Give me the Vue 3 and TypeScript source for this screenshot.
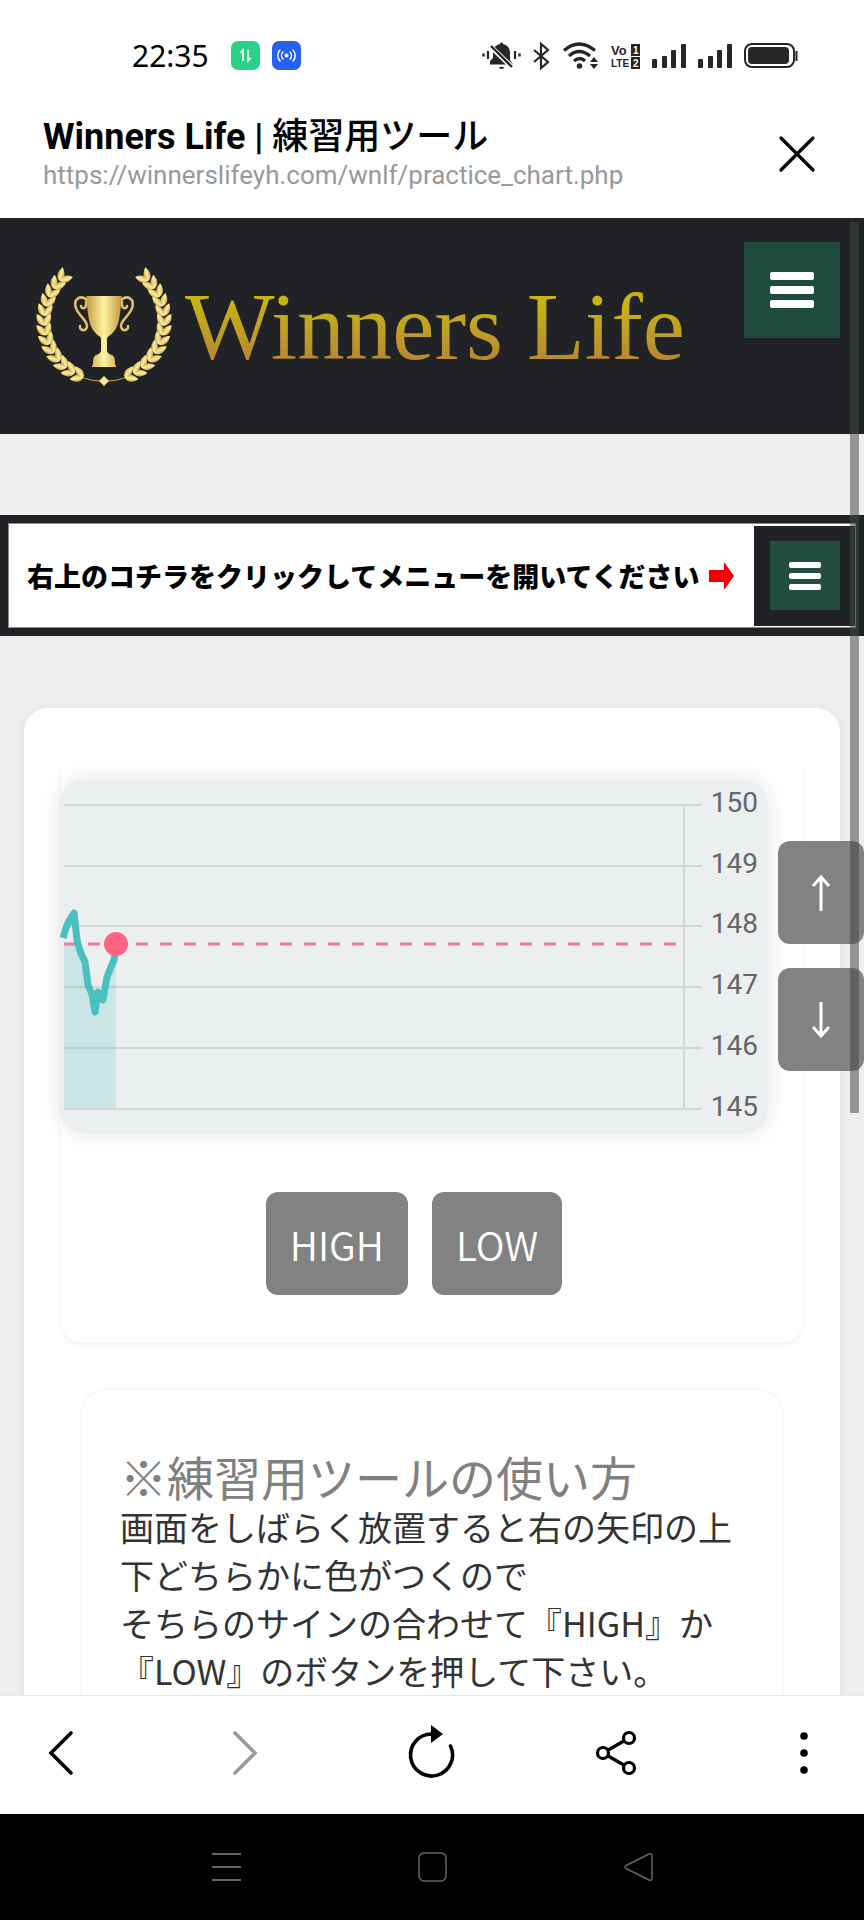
<script setup lang="ts">
interface Leaf { x: number; y: number; angle: number }
interface Tick { label: number; y: number }

// Pairs of leaves along the left half of an ellipse, from its foot to its tip.
const PAIRS = 13
const RX = 60
const RY = 60
const leaves: Leaf[] = []
for (let i = 0; i < PAIRS; i++) {
  const t = ((110 + (i * 112) / (PAIRS - 1)) * Math.PI) / 180
  const x = 69 + RX * Math.cos(t)
  const y = 56 + RY * Math.sin(t)
  const up = (Math.atan2(-RX * Math.sin(t), -RY * Math.cos(t)) * 180) / Math.PI
  leaves.push({ x, y, angle: up - 28 }, { x, y, angle: up + 32 })
}

const ticks: Tick[] = [150, 149, 148, 147, 146, 145].map((label, i) => ({ label, y: 25 + Math.round(i * 60.7) }))

const series: [number, number][] = [
  [3, 158], [6, 148], [9, 141], [14, 133], [17, 160], [20, 171], [25, 182], [28, 205],
  [32, 214], [35, 232], [38, 212], [43, 220], [47, 197], [51, 187], [54, 180], [56, 165],
]
const linePoints: string = series.map((p) => p.join(',')).join(' ')
const areaPoints: string = `4,158 ${linePoints} 56,328 4,328`
</script>

<template>
  <div class="phone">
    <div class="status">
      <time class="clock">22:35</time>
      <svg class="app-dot first" width="29" height="29" viewBox="0 0 29 29" aria-hidden="true">
        <rect width="29" height="29" rx="7" fill="#2bd185" />
        <path d="M9 12l3-3v11M17 9v11l3-3" fill="none" stroke="#fff" stroke-width="1.7" />
      </svg>
      <svg class="app-dot" width="29" height="29" viewBox="0 0 29 29" aria-hidden="true">
        <rect width="29" height="29" rx="7" fill="#2560f0" />
        <circle cx="14.500" cy="14.500" r="2" fill="#fff" />
        <path d="M11 11a5 5 0 0 0 0 7M18 11a5 5 0 0 1 0 7M8 9a8 8 0 0 0 0 11M21 9a8 8 0 0 1 0 11" fill="none" stroke="#fff" stroke-width="1.5" stroke-linecap="round" />
      </svg>
      <div class="status-right">
        <svg width="39" height="28" viewBox="0 0 39 28" fill="#262626" aria-hidden="true">
          <path d="M18 2q0-1.500 1.500-1.500T21 2q6 1 7 8v8l3 4.500H8V19l3-3v-6q1-7 7-8zM17 25h5q0 2-2.500 2T17 25z" />
          <path d="M7 3l24 23" stroke="#fff" stroke-width="5" />
          <path d="M9 4l21 21" stroke="#262626" stroke-width="2.400" />
          <path d="M6 9v8M33 9v8" stroke="#262626" stroke-width="2.200" />
          <path d="M1.500 11.500v3M37.500 11.500v3" stroke="#262626" stroke-width="2.400" />
        </svg>
        <svg width="18" height="28" viewBox="0 0 18 28" aria-hidden="true">
          <path d="M1 8l14 12-7 6V2l7 6L1 20" fill="none" stroke="#262626" stroke-width="2.200" />
        </svg>
        <svg width="36" height="28" viewBox="0 0 36 28" aria-hidden="true">
          <path d="M1 8.500q15-13 31 0M6 14q10-9 21 0M11 19q6-5 11 0" fill="none" stroke="#262626" stroke-width="3.200" />
          <circle cx="16.500" cy="24" r="2.800" fill="#262626" />
          <path d="M27 20l4-5 4 5zM27 22l4 5 4-5z" fill="#262626" />
        </svg>
        <svg width="29" height="28" viewBox="0 0 29 28" aria-hidden="true">
          <rect x="20" y="2" width="9" height="12" fill="#262626" />
          <rect x="20" y="15" width="9" height="12" fill="#262626" />
          <g class="volte" fill="#262626">
            <text class="vo" x="0" y="13">Vo</text>
            <text x="0" y="25">LTE</text>
          </g>
          <g class="volte" fill="#fff">
            <text x="22" y="12">1</text>
            <text x="22" y="25">2</text>
          </g>
        </svg>
        <svg v-for="n in 2" :key="n" width="34" height="28" viewBox="0 0 34 28" fill="#262626" aria-hidden="true">
          <rect y="17" width="5" height="9" rx="1" />
          <rect x="10" y="14" width="5" height="12" rx="1" />
          <rect x="19" y="8" width="5" height="18" rx="1" />
          <rect x="29" y="2" width="5" height="24" rx="1" />
        </svg>
        <svg width="54" height="28" viewBox="0 0 54 28" aria-hidden="true">
          <rect x="1" y="2" width="49" height="23" rx="7" fill="none" stroke="#262626" stroke-width="2" />
          <rect x="4" y="5" width="41" height="17" rx="4" fill="#262626" />
          <path d="M52.500 9v10" stroke="#262626" stroke-width="2" />
        </svg>
      </div>
    </div>

    <header class="app-bar">
      <div class="page-info">
        <h1>Winners Life | <span class="jp">練習用ツール</span></h1>
        <p>https://winnerslifeyh.com/wnlf/practice_chart.php</p>
      </div>
      <button class="icon-btn" type="button" aria-label="閉じる">
        <svg width="40" height="40" viewBox="0 0 40 40"><path d="M4 4l32 32M36 4L4 36" stroke="#000" stroke-width="3.200" stroke-linecap="round" /></svg>
      </button>
    </header>

    <main class="viewport">
      <div class="site-head">
        <a class="logo" href="#top">
          <svg class="crest" width="138" height="124" viewBox="0 0 138 124" aria-hidden="true">
            <defs>
              <linearGradient id="cup" x1="0" x2="1" y1="0" y2="0">
                <stop offset="0" stop-color="#c79a3c" /><stop offset=".5" stop-color="#fdf3a2" /><stop offset="1" stop-color="#c3953a" />
              </linearGradient>
              <linearGradient id="leaf" x1="0" x2="1" y1="0" y2="0">
                <stop offset="0" stop-color="#cda447" /><stop offset=".5" stop-color="#fbefa0" /><stop offset="1" stop-color="#d5ae50" />
              </linearGradient>
              <g id="branch">
                <path
                  v-for="(leaf, i) in leaves" :key="i" fill="url(#leaf)"
                  d="M0 0C-5-4-4-9 0-14C4-9 5-4 0 0Z"
                  :transform="`translate(${leaf.x} ${leaf.y}) rotate(${leaf.angle})`"
                />
                <path d="M49 113q8 3 16 3" fill="none" stroke="#cda447" />
              </g>
            </defs>
            <use href="#branch" />
            <use href="#branch" transform="matrix(-1 0 0 1 138 0)" />
            <path d="M69 111l5 5-5 5-5-5z" fill="#f7e48c" />
            <g fill="none" stroke="#dcc06a" stroke-width="2.600" stroke-linecap="round">
              <path d="M53 36c-8-8-15-1-12 7 2 7 11 12 11 18 0 6-8 5-7 0M51 37c1 8-5 7-5 4" />
              <path d="M85 36c8-8 15-1 12 7-2 7-11 12-11 18 0 6 8 5 7 0M87 37c-1 8 5 7 5 4" />
            </g>
            <path d="M51 31h36l-1 3q0 14-3 25-3 8-9 12-2 1-2 3v12q1 3 5 4 3 1 3 8v2h1v2H57v-2h1v-2q0-7 3-8 4-1 5-4V74q0-2-2-3-6-4-9-12-3-11-3-25z" fill="url(#cup)" />
          </svg>
          <span class="logo-text">Winners Life</span>
        </a>
        <button class="menu" type="button" aria-label="メニュー"><span /><span /><span /></button>
      </div>

      <div class="notice">
        <div class="notice-body">
          <p>右上のコチラをクリックしてメニューを開いてください</p>
          <svg width="25" height="28" viewBox="0 0 25 28" aria-hidden="true"><path d="M0 8h15V0l10 14-10 14v-8H0z" fill="#f00000" /></svg>
          <div class="notice-menu">
            <div class="menu small"><span /><span /><span /></div>
          </div>
        </div>
      </div>

      <section class="card">
        <div class="panel trade">
          <svg class="chart" viewBox="0 0 708 353" role="img" aria-label="練習用チャート">
            <defs><clipPath id="below"><rect y="164" width="708" height="170" /></clipPath></defs>
            <g stroke="#d2d7d8" stroke-width="2">
              <path v-for="t in ticks" :key="t.label" :d="`M4 ${t.y}H642`" />
              <path d="M624 25V328" />
            </g>
            <g class="axis">
              <text v-for="t in ticks" :key="t.label" x="698" :y="t.y + 7">{{ t.label }}</text>
            </g>
            <polygon :points="areaPoints" fill="rgba(75,192,192,.2)" clip-path="url(#below)" />
            <path d="M4 164H616" stroke="#ee7b97" stroke-width="3" stroke-dasharray="12 12" />
            <polyline :points="linePoints" fill="none" stroke="#4bc0c0" stroke-width="7" stroke-linejoin="round" />
            <circle cx="56" cy="164" r="12" fill="#ff6384" />
          </svg>
          <div class="actions">
            <button type="button">HIGH</button>
            <button type="button">LOW</button>
          </div>
        </div>

        <article class="panel guide">
          <h2>※練習用ツールの使い方</h2>
          <p>画面をしばらく放置すると右の矢印の上下どちらかに色がつくので<br>そちらのサインの合わせて『HIGH』か『LOW』のボタンを押して下さい。</p>
        </article>
      </section>

      <div class="signals">
        <button type="button" aria-label="上">
          <svg width="20" height="38" viewBox="0 0 20 38"><path d="M10 37V3M2 12l8-9 8 9" fill="none" stroke="#fff" stroke-width="3" /></svg>
        </button>
        <button type="button" aria-label="下">
          <svg width="20" height="38" viewBox="0 0 20 38"><path d="M10 1v34M2 26l8 9 8-9" fill="none" stroke="#fff" stroke-width="3" /></svg>
        </button>
      </div>
      <div class="thumb" />
    </main>

    <nav class="toolbar">
      <button class="icon-btn" type="button" aria-label="戻る">
        <svg width="48" height="48" viewBox="0 0 48 48"><path d="M34 4L14 24l20 20" fill="none" stroke="#000" stroke-width="3.600" stroke-linecap="round" /></svg>
      </button>
      <button class="icon-btn" type="button" aria-label="進む">
        <svg width="48" height="48" viewBox="0 0 48 48"><path d="M12 4l20 20-20 20" fill="none" stroke="#999" stroke-width="3.600" stroke-linecap="round" /></svg>
      </button>
      <button class="icon-btn" type="button" aria-label="再読み込み">
        <svg width="48" height="48" viewBox="0 0 48 48">
          <path d="M42.500 17A21 21 0 1 1 24 5" fill="none" stroke="#000" stroke-width="3.600" stroke-linecap="round" />
          <path d="M23-4l12 9-12 9z" />
        </svg>
      </button>
      <button class="icon-btn" type="button" aria-label="共有">
        <svg width="48" height="48" viewBox="0 0 48 48">
          <path d="M9 24l26-15M9 24l26 15" stroke="#000" stroke-width="3.200" />
          <g fill="#fff" stroke="#000" stroke-width="3.200"><circle cx="9" cy="24" r="5.500" /><circle cx="35" cy="9" r="5.500" /><circle cx="35" cy="39" r="5.500" /></g>
        </svg>
      </button>
      <button class="icon-btn" type="button" aria-label="その他">
        <svg width="48" height="48" viewBox="0 0 48 48"><circle cx="25" cy="7" r="3.800" /><circle cx="25" cy="24" r="3.800" /><circle cx="25" cy="41" r="3.800" /></svg>
      </button>
    </nav>

    <nav class="system">
      <button class="icon-btn" type="button" aria-label="アプリ一覧">
        <svg width="32" height="32" viewBox="0 0 32 32"><path d="M2 3h29M2 16h29M2 29h29" stroke="#666" stroke-width="2" /></svg>
      </button>
      <button class="icon-btn" type="button" aria-label="ホーム">
        <svg width="32" height="32" viewBox="0 0 32 32"><rect x="3" y="2" width="27" height="28" rx="5" fill="none" stroke="#666" stroke-width="1.500" /></svg>
      </button>
      <button class="icon-btn" type="button" aria-label="戻る">
        <svg width="32" height="32" viewBox="0 0 32 32"><path d="M4 14.500L27 3q3-1 3 2v22q0 3-3 2L4 17.500q-2-1.500 0-3z" fill="none" stroke="#666" stroke-width="1.500" /></svg>
      </button>
    </nav>
  </div>
</template>

<style>
body {
  margin: 0;
}
</style>

<style scoped>
.phone {
  display: flex;
  flex-direction: column;
  height: 100vh;
  overflow: hidden;
  background: #fff;
  font-family: Roboto, "Noto Sans CJK JP", sans-serif;
}
h1, h2, p {
  margin: 0;
  font-weight: 400;
}
svg {
  display: block;
  overflow: visible;
}
button {
  border: 0;
  padding: 0;
  font: inherit;
}
.icon-btn {
  background: none;
}

.status {
  display: flex;
  align-items: center;
  height: 111px;
  padding: 0 66px 0 132px;
}
.clock {
  font: 30px "Noto Sans", sans-serif;
}
.app-dot {
  margin-left: 12px;
}
.app-dot.first {
  margin-left: 22px;
}
.status-right {
  display: flex;
  gap: 12px;
  margin-left: auto;
}
.volte {
  font: bold 10px "Liberation Sans", sans-serif;
}
.volte .vo {
  font-size: 13px;
}

.app-bar {
  display: flex;
  align-items: center;
  justify-content: space-between;
  height: 107px;
  box-sizing: border-box;
  padding: 0 47px 22px 43px;
}
.app-bar h1 {
  font-size: 36px;
  font-weight: 700;
  line-height: 42px;
}
.app-bar .jp {
  font-weight: 500;
}
.app-bar p {
  color: #999;
  font-size: 26px;
  line-height: 34px;
}

.viewport {
  position: relative;
  flex: 1;
  min-height: 0;
  overflow: hidden;
  background: #eee;
}
.site-head {
  display: flex;
  align-items: flex-start;
  justify-content: space-between;
  height: 216px;
  box-sizing: border-box;
  padding: 24px 24px 0 35px;
  background: #202225;
}
.logo {
  display: flex;
  align-items: center;
  gap: 12px;
  padding-top: 22px;
  text-decoration: none;
}
.logo-text {
  font: 95px/126px "Liberation Serif", serif;
  white-space: nowrap;
  background: linear-gradient(#c8b414 30%, #b68636 78%);
  background-clip: text;
  color: transparent;
}
.menu {
  display: flex;
  flex-direction: column;
  align-items: center;
  justify-content: center;
  flex: none;
  gap: 6px;
  width: 96px;
  height: 96px;
  background: #1d4b3e;
}
.menu span {
  width: 44px;
  height: 8px;
  border-radius: 2px;
  background: #fff;
}
.menu.small {
  gap: 5px;
  width: 70px;
  height: 69px;
  background: #234d3d;
}
.menu.small span {
  width: 32px;
  height: 6px;
}

.notice {
  margin-top: 81px;
  padding: 8px;
  background: #202225;
}
.notice-body {
  display: flex;
  align-items: center;
  height: 103px;
  border: 1px solid #888b8d;
  background: #fff;
}
.notice-body p {
  flex: 1;
  padding-left: 18px;
  color: #000;
  font: 900 27px/40px "Noto Sans CJK JP", sans-serif;
  white-space: nowrap;
}
.notice-menu {
  display: flex;
  align-items: center;
  justify-content: center;
  width: 101px;
  height: 100px;
  margin-left: 20px;
  background: #202225;
}

.card {
  margin: 72px 24px 0;
  padding: 36px;
  border-radius: 24px;
  background: #fff;
  box-shadow: 0 0 8px rgba(0, 0, 0, 0.06);
}
.panel {
  border-radius: 24px;
  box-shadow: 0 0 4px rgba(0, 0, 0, 0.08);
}
.trade {
  padding: 36px 36px 48px 0;
  box-shadow: 0 3px 4px rgba(0, 0, 0, 0.05);
}
.chart {
  width: 100%;
  border-radius: 24px;
  background: #ebeff0;
  box-shadow: 0 0 24px rgba(0, 0, 0, 0.1);
}
.axis {
  fill: #666;
  font: 28px Roboto, sans-serif;
  text-anchor: end;
}
.actions {
  display: flex;
  justify-content: center;
  gap: 24px;
  margin-top: 59px;
}
.actions button {
  height: 103px;
  padding: 0 24px;
  border-radius: 12px;
  background: #828282;
  color: #fff;
  font: 350 39px/56px "Noto Sans CJK JP", sans-serif;
}
.guide {
  margin: 47px 22px 0;
  padding: 59px 38px;
  color: #333;
  font: 34px/48px "Noto Sans CJK JP", sans-serif;
}
.guide h2 {
  color: #808080;
  font-size: 47px;
  line-height: 54px;
}

.signals {
  position: absolute;
  top: 623px;
  right: 0;
  display: flex;
  flex-direction: column;
  gap: 24px;
}
.signals button {
  display: flex;
  align-items: center;
  justify-content: center;
  width: 86px;
  height: 103px;
  border-radius: 12px;
  background: #828282;
}
.thumb {
  position: absolute;
  top: 4px;
  right: 5px;
  width: 9px;
  height: 891px;
  background: rgba(66, 74, 68, 0.53);
}

.toolbar {
  display: flex;
  align-items: center;
  justify-content: space-between;
  height: 119px;
  box-sizing: border-box;
  padding: 0 37px 4px;
  border-top: 1px solid #e8e8e8;
  background: #fff;
}
.system {
  display: flex;
  align-items: center;
  justify-content: center;
  gap: 174px;
  height: 106px;
  background: #000;
}
</style>
